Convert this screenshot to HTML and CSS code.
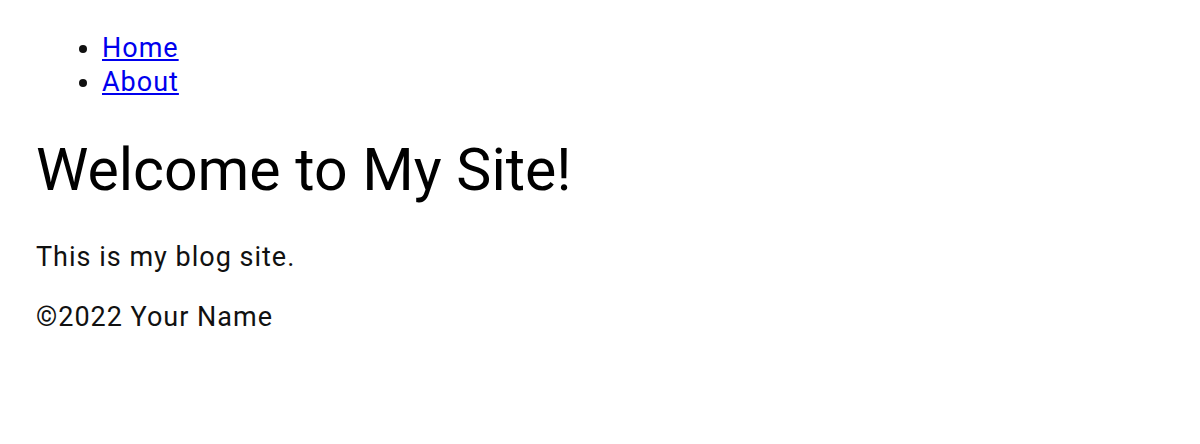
FILE: index.html
```html
<!DOCTYPE html>
<html>
    <head>
        <title>My Site</title>
        <link rel="stylesheet" href="styles.css">
    </head>
    <body>
        <nav>
            <ul class="nav-list">
                <li><a href="/">Home</a></li>
                <li><a href="/about">About</a></li>
            </ul>
        </nav>
        <main>
            <h1>Welcome to My Site!</h1>
            <p>This is my blog site.</p>
        </main>
        <footer>
            <p>&copy;2022 Your Name</p>
        </footer>
    </body>
</html>
```

FILE: styles.css
```css
body {
    margin: 0;
    padding: 8px 36px;
    font-family: Roboto, sans-serif;
    font-size: 27px;
    line-height: 34px;
    letter-spacing: 1px;
    color: #111;
}

a {
    color: #0000ee;
}

.nav-list {
    margin: 23px 0;
    padding-left: 66px;
}

h1 {
    font-size: 59px;
    font-weight: 400;
    letter-spacing: 0;
    line-height: 1.2;
    margin: 36px 0 34px;
    color: #000;
}

p {
    margin: 26px 0;
}
```
